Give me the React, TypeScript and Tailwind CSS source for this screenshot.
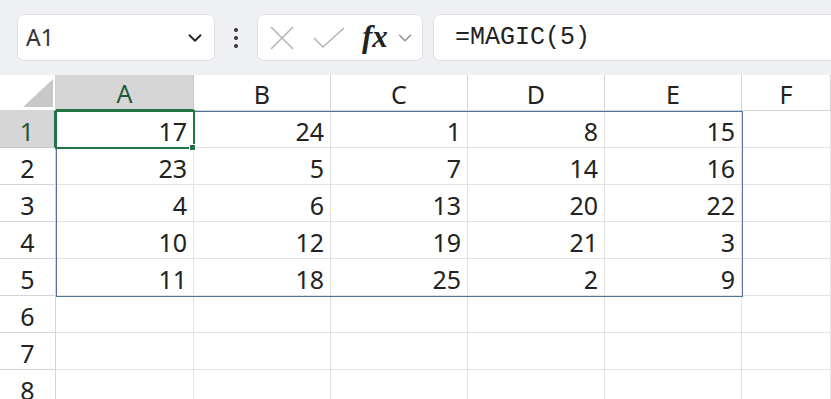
import { ChevronDown } from "lucide-react";

const cols = ["A", "B", "C", "D", "E", "F"];
const data = [
  [17, 24, 1, 8, 15],
  [23, 5, 7, 14, 16],
  [4, 6, 13, 20, 22],
  [10, 12, 19, 21, 3],
  [11, 18, 25, 2, 9],
];
const rowCount = 8;

export default function App() {
  return (
    <div className="w-[831px] h-[399px] overflow-hidden bg-white font-['Noto_Sans','Open_Sans',sans-serif] text-[#222]">
      {/* Formula bar */}
      <div className="h-[75px] bg-[#eef0f3] flex items-start pt-[14px] pl-[17px]">
        <div className="w-[198px] h-[47px] bg-white border border-[#dfe1e4] rounded-[7px] flex items-center pl-[8px] pr-[8px]">
          <span className="text-[23px] text-[#333] flex-1">A1</span>
          <ChevronDown size={22} strokeWidth={2} className="text-[#222]" />
        </div>
        <div className="w-[42px] h-[47px] flex flex-col items-center justify-center gap-[4px]">
          <span className="block size-[4px] rounded-full bg-[#333]" />
          <span className="block size-[4px] rounded-full bg-[#333]" />
          <span className="block size-[4px] rounded-full bg-[#333]" />
        </div>
        <div className="w-[166px] h-[47px] bg-white border border-[#dfe1e4] rounded-[7px] flex items-center pl-[12px]">
          <svg width="24" height="24" viewBox="0 0 24 24" className="mr-[19px]">
            <path d="M1 1 L23 23 M23 1 L1 23" stroke="#b4b4b4" strokeWidth="1.6" fill="none" />
          </svg>
          <svg width="32" height="22" viewBox="0 0 32 22" className="mr-[17px]">
            <path d="M1 11 L10 20 L31 1" stroke="#b4b4b4" strokeWidth="1.6" fill="none" />
          </svg>
          <span className="font-['Liberation_Serif',serif] italic font-bold text-[31px] leading-none text-[#222] mr-[6px] -mt-[2px]">fx</span>
          <ChevronDown size={22} strokeWidth={1.3} className="text-[#888]" />
        </div>
        <div className="ml-[10px] flex-1 h-[47px] bg-white border border-[#dfe1e4] border-r-0 rounded-l-[7px] flex items-center pl-[21px]">
          <span className="font-['Liberation_Mono',monospace] text-[25px] text-[#222]">=MAGIC(5)</span>
        </div>
      </div>

      {/* Grid */}
      <div className="relative">
        <div className="grid grid-cols-[56px_138px_137px_137px_137px_137px_1fr] grid-rows-[36px_repeat(8,37px)]">
          <div className="relative border-r border-b border-[#d4d4d4] bg-white">
            <svg width="30" height="28" viewBox="0 0 30 28" className="absolute right-[2px] bottom-[3px]">
              <path d="M30 0 L30 28 L0 28 Z" fill="#c8c8c8" />
            </svg>
          </div>
          {cols.map((c, i) => (
            <div
              key={c}
              className={
                i === 0
                  ? "bg-[#d6d6d6] border-r border-b-2 border-b-[#217346] border-r-[#c6c6c6] flex items-center justify-center pt-[4px] text-[25px] text-[#1d5b3a]"
                  : "bg-white border-r border-b border-[#d4d4d4] flex items-center justify-center pt-[4px] text-[25px] text-[#222]"
              }
            >
              {c}
            </div>
          ))}
          {Array.from({ length: rowCount }).map((_, r) => (
            <Row key={r} r={r} />
          ))}
        </div>

        {/* Range border A1:E5 */}
        <div className="absolute left-[56px] top-[36px] w-[687px] h-[186px] border border-[#51749f] pointer-events-none" />
        {/* Active cell A1 */}
        <div className="absolute left-[55px] top-[35px] w-[140px] h-[39px] border-2 border-[#217346] pointer-events-none" />
        <div className="absolute left-[189px] top-[69px] size-[7px] bg-[#217346] border border-white pointer-events-none" />
      </div>
    </div>
  );
}

function Row({ r }: { r: number }) {
  const selected = r === 0;
  return (
    <>
      <div
        className={
          selected
            ? "bg-[#d6d6d6] border-r-2 border-r-[#217346] border-b border-b-[#c6c6c6] flex items-center justify-center pt-[5px] text-[25px] text-[#1d5b3a]"
            : "bg-white border-r border-b border-[#d4d4d4] flex items-center justify-center pt-[5px] text-[25px] text-[#222]"
        }
      >
        {r + 1}
      </div>
      {cols.map((c, i) => (
        <div
          key={c}
          className="border-r border-b border-[#e2e2e2] flex items-center justify-end pr-[6px] pt-[6px] text-[25px] text-[#222]"
        >
          {data[r] && i < 5 ? data[r][i] : ""}
        </div>
      ))}
    </>
  );
}
